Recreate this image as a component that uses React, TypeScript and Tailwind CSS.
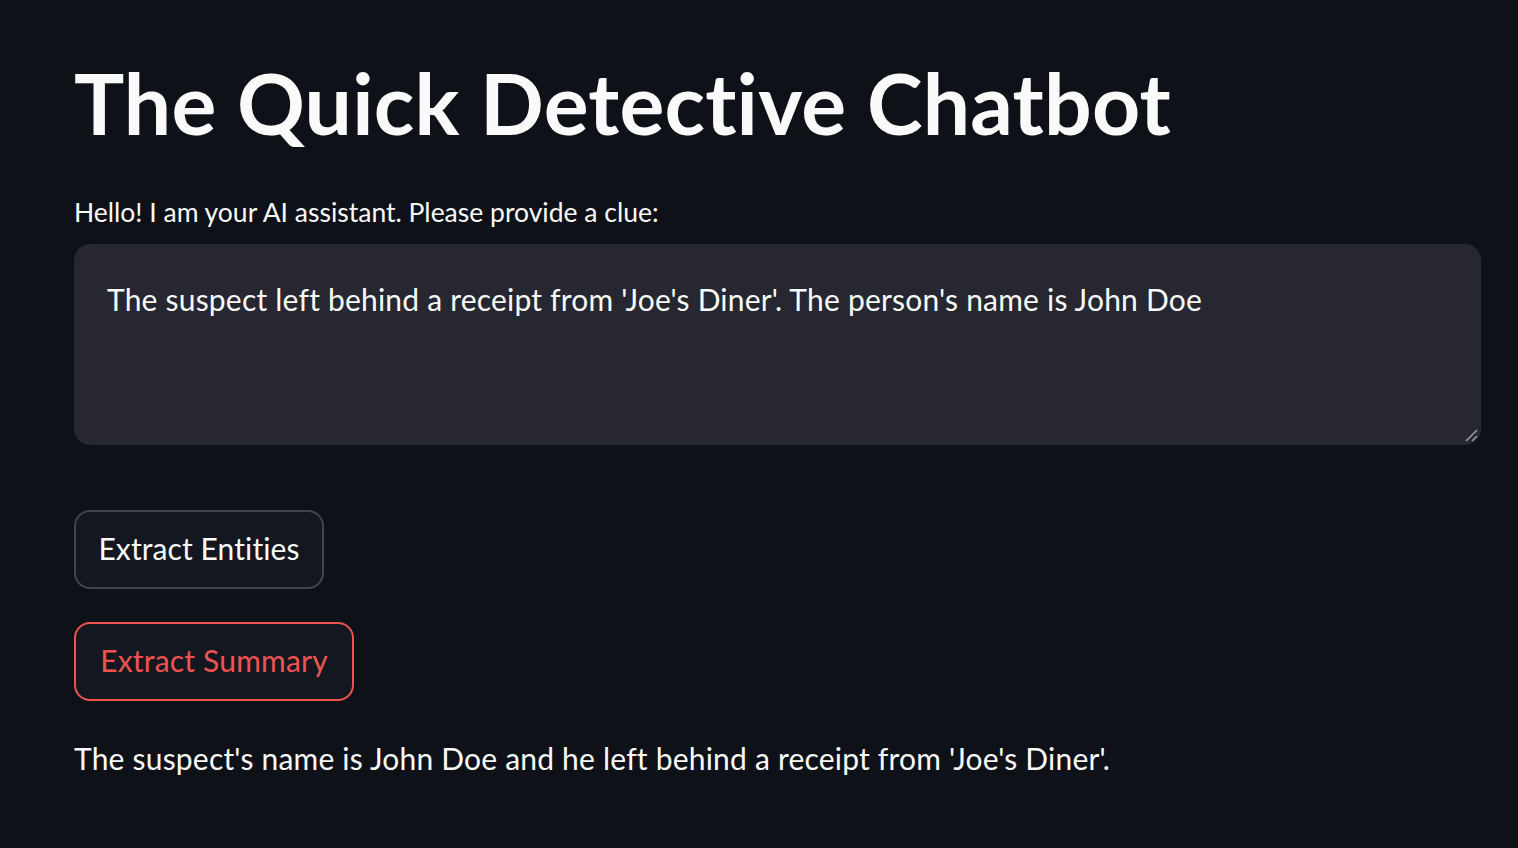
import React from "react";

export default function App() {
  return (
    <div
      className="min-h-[848px] w-full bg-[#0e1117] text-[#fafafa] [font-variant-ligatures:none]"
      style={{ fontFamily: "Lato, 'Noto Sans', sans-serif" }}
    >
      <div className="flex flex-col pl-[74px] pr-[37px] pt-[53px]">
        <h1 className="text-[84px] font-bold leading-[100px] tracking-[0.2px] text-[#fafafa]">
          The Quick Detective Chatbot
        </h1>
        <label className="mt-[43px] text-[26.5px] leading-[32px]">
          Hello! I am your AI assistant. Please provide a clue:
        </label>
        <div className="relative mt-[16px] h-[201px] w-full rounded-[16px] bg-[#262730] pl-[33px] pr-[33px] pt-[35px] text-[30px] leading-[40px] tracking-[0.2px]">
          The suspect left behind a receipt from 'Joe's Diner'. The person's name is John Doe
          <svg
            className="absolute bottom-[3px] right-[3px]"
            width="14"
            height="14"
            viewBox="0 0 14 14"
          >
            <line x1="2" y1="13" x2="13" y2="2" stroke="#a0a2a8" strokeWidth="1.5" />
            <line x1="8" y1="13" x2="13" y2="8" stroke="#a0a2a8" strokeWidth="1.5" />
          </svg>
        </div>
        <div className="mt-[65px] flex flex-col items-start gap-[33px]">
          <button className="flex h-[79px] w-[250px] items-center justify-center rounded-[16px] border-2 border-[#43454b] bg-[#131720] pb-[3px] text-[30px] tracking-[0.1px] text-[#fafafa]">
            Extract Entities
          </button>
          <button className="flex h-[79px] w-[280px] items-center justify-center rounded-[16px] border-2 border-[#f0534f] bg-[#131720] pb-[3px] text-[30px] tracking-[0.2px] text-[#f0534f]">
            Extract Summary
          </button>
        </div>
        <p className="mt-[37px] text-[30px] leading-[40px] tracking-[0.2px]">
          The suspect's name is John Doe and he left behind a receipt from 'Joe's Diner'.
        </p>
      </div>
    </div>
  );
}
